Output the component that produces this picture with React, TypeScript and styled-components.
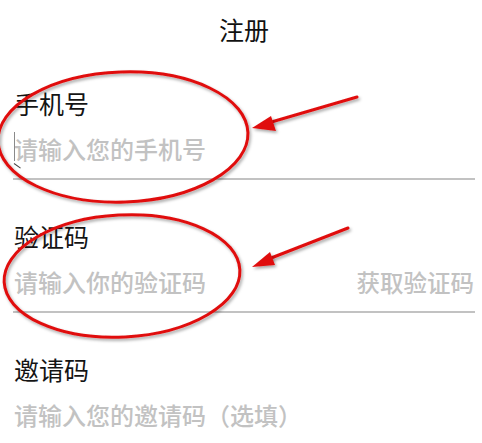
import React from "react";
import styled, { createGlobalStyle } from "styled-components";

const GlobalStyle = createGlobalStyle`
  html, body {
    margin: 0;
    padding: 0;
    background: #ffffff;
  }
  body {
    font-family: "Noto Sans CJK SC", "Noto Sans", sans-serif;
  }
  * { box-sizing: border-box; }
`;

const Page = styled.div`
  position: relative;
  width: 482px;
  height: 443px;
  overflow: hidden;
  background: #ffffff;
`;

const Header = styled.header`
  height: 57px;
  display: flex;
  align-items: center;
  justify-content: center;
  font-size: 25px;
  color: #111111;
  padding-left: 6px;
`;

const Form = styled.div`
  display: flex;
  flex-direction: column;
  gap: 36px;
  padding: 26px 7px 0 13px;
`;

const Field = styled.div<{ $line?: boolean }>`
  display: flex;
  flex-direction: column;
  padding-bottom: ${(p) => (p.$line ? "9px" : "0")};
  border-bottom: ${(p) => (p.$line ? "2px solid #c2c2c2" : "none")};
`;

const Label = styled.div`
  height: 40px;
  line-height: 40px;
  font-size: 25px;
  color: #141414;
  padding-left: 1px;
`;

const InputRow = styled.div`
  position: relative;
  display: flex;
  align-items: center;
  justify-content: space-between;
  height: 40px;
  margin-top: 6px;
`;

const Placeholder = styled.span`
  font-size: 24px;
  font-weight: 500;
  line-height: 40px;
  color: #c2c2c2;
  padding-left: 1px;
`;

const CodeButton = styled.span`
  font-size: 23.5px;
  font-weight: 500;
  line-height: 40px;
  color: #c2c2c2;
  padding-right: 1px;
`;

const Caret = styled.span`
  position: absolute;
  left: 1px;
  top: 3px;
  width: 1px;
  height: 29px;
  background: #8a8a8a;
  &::after {
    content: "";
    position: absolute;
    left: 0;
    bottom: -3px;
    width: 8px;
    height: 1px;
    background: #444;
    transform: rotate(35deg);
    transform-origin: left center;
  }
`;

const Overlay = styled.svg`
  position: absolute;
  left: 0;
  top: 0;
  width: 482px;
  height: 443px;
  pointer-events: none;
`;

export default function App() {
  return (
    <>
      <GlobalStyle />
      <Page>
        <Header>注册</Header>
        <Form>
          <Field $line>
            <Label>手机号</Label>
            <InputRow>
              <Caret />
              <Placeholder>请输入您的手机号</Placeholder>
            </InputRow>
          </Field>
          <Field $line>
            <Label>验证码</Label>
            <InputRow>
              <Placeholder>请输入你的验证码</Placeholder>
              <CodeButton>获取验证码</CodeButton>
            </InputRow>
          </Field>
          <Field>
            <Label>邀请码</Label>
            <InputRow>
              <Placeholder>请输入您的邀请码（选填）</Placeholder>
            </InputRow>
          </Field>
        </Form>
        <Overlay viewBox="0 0 482 443">
          <defs>
            <filter id="sh" x="-20%" y="-20%" width="140%" height="140%">
              <feDropShadow dx="1.5" dy="2" stdDeviation="1.5" floodColor="#000" floodOpacity="0.35" />
            </filter>
          </defs>
          <g filter="url(#sh)" fill="none" stroke="#e01010" strokeWidth="3">
            <ellipse cx="123" cy="137" rx="125" ry="65" transform="rotate(-2 123 137)" />
            <ellipse cx="122" cy="276" rx="118" ry="61" transform="rotate(-3 122 276)" />
            <line x1="357" y1="97" x2="268" y2="123" strokeLinecap="round" />
            <line x1="348" y1="228" x2="266" y2="260" strokeLinecap="round" />
          </g>
          <g filter="url(#sh)" fill="#e01010">
            <polygon points="252,128 271,116 276,131" />
            <polygon points="252,267 270,252 275,265" />
          </g>
        </Overlay>
      </Page>
    </>
  );
}
